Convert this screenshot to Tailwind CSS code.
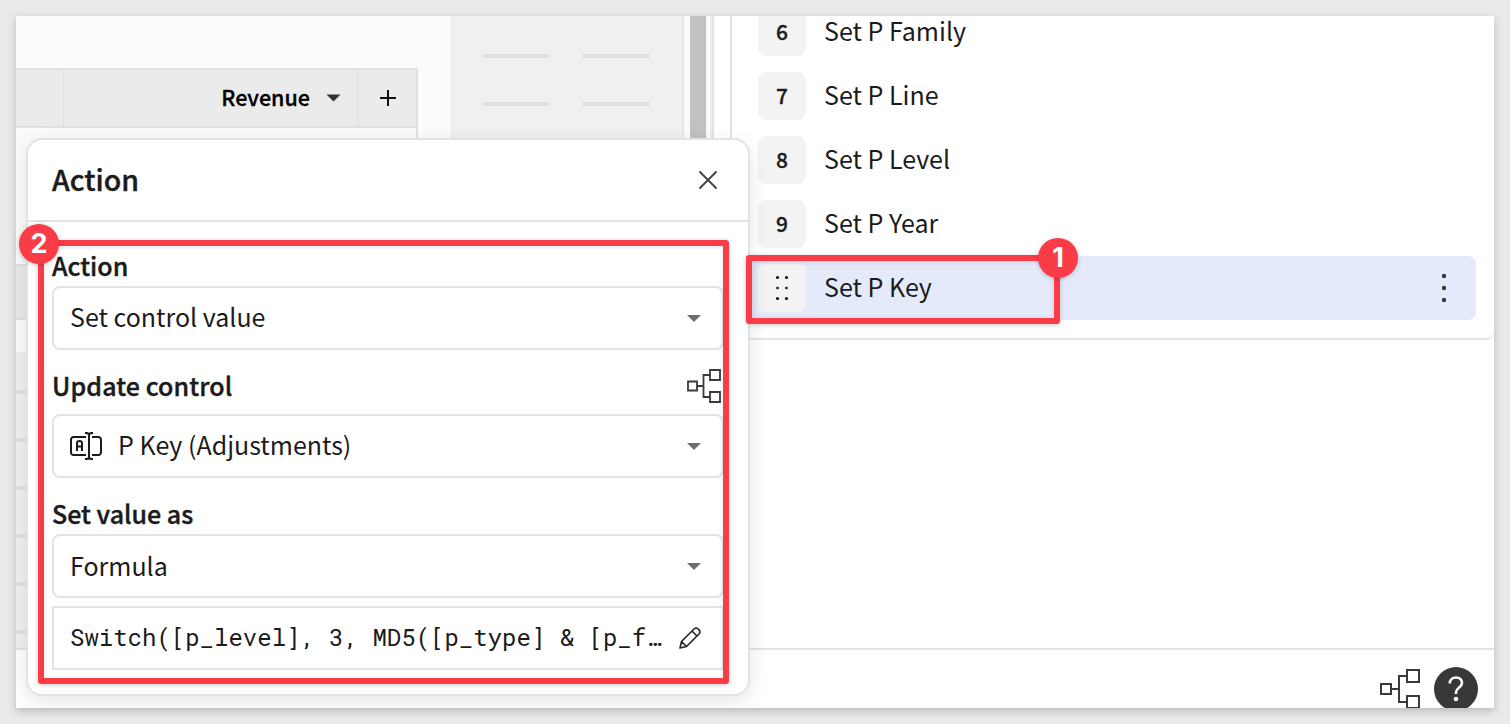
<!DOCTYPE html>
<html lang="en">
<head>
<meta charset="utf-8">
<title>Action editor</title>
<script src="https://cdn.jsdelivr.net/npm/@tailwindcss/browser@4"></script>
</head>
<body class="h-[724px] w-[1510px] overflow-hidden bg-[#eaeaea] p-4 font-['Noto_Sans_CJK_SC',sans-serif] text-[#1b1b1b]">
<div class="h-[692px] w-[1478px] bg-white shadow-[0_3px_8px_rgba(0,0,0,0.22)]">
<main class="relative flex h-[692px] w-[1478px] overflow-hidden">

  <!-- workbook canvas -->
  <section class="flex h-[634px] w-[698px] shrink-0 bg-[#fbfbfb]">
    <div class="flex w-[434px] flex-col">
      <div class="mt-[52px] flex h-[60px] w-[402px] border-y-2 border-r-2 border-[#e0e0e0] bg-[#ebebeb]">
        <div class="w-12 border-r border-[#e0e0e0]"></div>
        <div class="flex flex-1 items-center justify-end border-r-2 border-[#e3e3e3] pr-4">
          <span class="pb-[3px] text-[21.5px] leading-[53px] font-medium text-black [-webkit-text-stroke:0.3px_black]">Revenue</span>
          <svg class="ml-4" width="15" height="8" viewBox="0 0 15 8"><path d="M.5.5h14l-7 7z" fill="#333"/></svg>
        </div>
        <div class="flex w-[57px] items-center justify-center"><svg width="16" height="16" viewBox="0 0 16 16" fill="none" stroke="#111" stroke-width="2"><path d="M8 0v16M0 8h16"/></svg></div>
      </div>
      <div class="h-[136px] w-[402px] border-r-2 border-[#e0e0e0]"></div>
      <div class="h-14 border-y-2 border-[#dedede] bg-[#e8e8e8]"></div>
      <div class="h-8"></div>
      <div class="flex flex-1 flex-col gap-11 border-b-2 border-[#e3e3e3] bg-[#f0f0f0] pt-[38px]">
        <div class="h-1 bg-[#e0e0e0]"></div><div class="h-1 bg-[#e0e0e0]"></div><div class="h-1 bg-[#e0e0e0]"></div>
        <div class="h-1 bg-[#e0e0e0]"></div><div class="h-1 bg-[#e0e0e0]"></div><div class="h-1 bg-[#e0e0e0]"></div>
      </div>
    </div>
    <div class="w-[234px] border-r-2 border-[#e6e6e6] bg-[#f0f0f0] pt-[38px] pl-8">
      <div class="grid grid-cols-[68px_68px] gap-x-8 gap-y-11">
        <div class="h-1 rounded-full bg-[#e0e0e0]"></div><div class="h-1 rounded-full bg-[#e0e0e0]"></div>
        <div class="h-1 rounded-full bg-[#e0e0e0]"></div><div class="h-1 rounded-full bg-[#e0e0e0]"></div>
      </div>
    </div>
    <div class="flex w-[30px] justify-between border-r-2 border-[#e3e3e3] pl-1.5"><div class="w-4 bg-[#c1c1c1]"></div><div class="w-0.5 bg-[#ededed]"></div></div>
  </section>

  <!-- action sequence -->
  <aside class="flex flex-1 flex-col pl-4">
    <div class="h-[324px] shrink-0 rounded-br-lg border-b-2 border-l-2 border-[#e3e3e3] pr-[18px] pl-2.5">
      <div class="-mt-4 flex h-16 items-center pl-4"><div class="flex size-12 items-center justify-center rounded-lg bg-[#f3f3f3] pb-0.5 text-[21px] leading-[28px] font-medium [-webkit-text-stroke:0.3px_#1b1b1b]">6</div><span class="pb-[3px] pl-[18px] text-[25px] leading-[27px]">Set P Family</span></div>
      <div class="flex h-16 items-center pl-4"><div class="flex size-12 items-center justify-center rounded-lg bg-[#f3f3f3] pb-0.5 text-[21px] leading-[28px] font-medium [-webkit-text-stroke:0.3px_#1b1b1b]">7</div><span class="pb-[3px] pl-[18px] text-[25px] leading-[27px]">Set P Line</span></div>
      <div class="flex h-16 items-center pl-4"><div class="flex size-12 items-center justify-center rounded-lg bg-[#f3f3f3] pb-0.5 text-[21px] leading-[28px] font-medium [-webkit-text-stroke:0.3px_#1b1b1b]">8</div><span class="pb-[3px] pl-[18px] text-[25px] leading-[27px]">Set P Level</span></div>
      <div class="flex h-16 items-center pl-4"><div class="flex size-12 items-center justify-center rounded-lg bg-[#f3f3f3] pb-0.5 text-[21px] leading-[28px] font-medium [-webkit-text-stroke:0.3px_#1b1b1b]">9</div><span class="pb-[3px] pl-[18px] text-[25px] leading-[27px]">Set P Year</span></div>
      <div class="flex h-16 items-center rounded-lg bg-[#e4eafa] pr-[29px] pl-4">
        <div class="flex size-12 items-center justify-center rounded-lg bg-[#f3f3f3]"><svg width="14" height="26" viewBox="0 0 14 26" fill="#111"><circle cx="2.5" cy="2.5" r="1.6"/><circle cx="11.5" cy="2.5" r="1.6"/><circle cx="2.5" cy="13" r="1.3"/><circle cx="11.5" cy="13" r="1.3"/><circle cx="2.5" cy="23.5" r="1.6"/><circle cx="11.5" cy="23.5" r="1.6"/></svg></div>
        <span class="flex-1 pb-[3px] pl-[18px] text-[25px] leading-[27px]">Set P Key</span>
        <svg width="6" height="30" viewBox="0 0 6 30" fill="#3a3a3a"><circle cx="3" cy="3" r="2.2"/><circle cx="3" cy="15" r="2.2"/><circle cx="3" cy="27" r="2.2"/></svg>
      </div>
    </div>
    <div class="h-[308px] shrink-0"></div>
    <footer class="-ml-4 flex h-[60px] items-start justify-end gap-3.5 border-t-2 border-[#e3e3e3] pt-[17px] pr-4">
      <svg class="mt-0.5 shrink-0" width="40" height="42" viewBox="0 0 40 42" fill="none" stroke="#3a3a3a" stroke-width="2"><path d="M1 15h10v10H1zM27 1h12v12H27zM27 27h12v12H27zM11 20h8M27 7h-8v26h8"/></svg>
      <div class="flex size-11 items-center justify-center rounded-full bg-[#383838]"><svg width="16" height="26" viewBox="0 0 16 26" fill="none" stroke="#fff" stroke-width="2.6"><path d="M1.8 7.5C1.8 3.8 4.3 1.5 8 1.5s6 2.2 6 5.4c0 4.5-6 5-6 9.2v2"/><circle cx="8" cy="23" r="2.3" fill="#fff" stroke="none"/></svg></div>
    </footer>
  </aside>

  <!-- action popover -->
  <div class="absolute top-[122px] left-2.5 h-[558px] w-[724px] rounded-2xl border-2 border-[#e3e3e3] bg-white shadow-[0_6px_20px_rgba(0,0,0,0.1)]">
    <header class="flex h-[82px] items-center justify-between border-b-2 border-[#e3e3e3] pr-[31px] pl-6">
      <h2 class="pb-0.5 text-[28.5px] leading-[78px] font-medium [-webkit-text-stroke:0.4px_#1b1b1b]">Action</h2>
      <svg width="18" height="18" viewBox="0 0 18 18" fill="none" stroke="#444" stroke-width="1.9" stroke-linecap="round"><path d="M1 1l16 16M17 1L1 17"/></svg>
    </header>
    <div class="flex w-[696px] flex-col pl-6">
      <div class="mt-6 flex h-10 items-center pb-px text-[25px] font-medium [-webkit-text-stroke:0.4px_#1b1b1b]">Action</div>
      <div class="flex h-16 items-center justify-between rounded-lg border-2 border-[#e3e3e3] pr-[21px] pl-4"><span class="pb-0.5 text-[25px]">Set control value</span><svg width="14" height="7" viewBox="0 0 14 7"><path d="M0 0h14L7 7z" fill="#6e6e6e"/></svg></div>
      <div class="mt-3 flex h-[52px] items-center justify-between pr-[3px] pb-1 text-[25px] font-medium"><span class="tracking-[0.1px] [-webkit-text-stroke:0.4px_#1b1b1b]">Update control</span><svg width="34" height="34" viewBox="0 0 34 34" fill="none" stroke="#3a3a3a" stroke-width="1.8"><path d="M1 12.5h9v9H1zM23 1h10v10H23zM23 23h10v10H23zM10 17h6.500M23 6h-6.500v22H23"/></svg></div>
      <div class="flex h-16 items-center rounded-lg border-2 border-[#e3e3e3] pr-[21px] pl-4">
        <svg width="32" height="28" viewBox="0 0 32 28" fill="none" stroke="#1b1b1b" stroke-width="2"><path d="M16 5H3.500A2.500 2.500 0 0 0 1 7.500v13A2.500 2.500 0 0 0 3.500 23H16M22 5h6.500A2.500 2.500 0 0 1 31 7.500v13a2.500 2.500 0 0 1-2.500 2.500H22M15 1h1.500q2.500 0 2.500 2.500v21q0 2.500-2.500 2.500H15M23 1h-1.500Q19 1 19 3.500v21q0 2.500 2.500 2.500H23M7 19v-8q0-2 2.500-2t2.500 2v8M7 14.500h5"/></svg>
        <span class="flex-1 pb-0.5 pl-4 text-[25px]">P Key (Adjustments)</span><svg width="14" height="7" viewBox="0 0 14 7"><path d="M0 0h14L7 7z" fill="#6e6e6e"/></svg></div>
      <div class="mt-4 flex h-10 items-center pb-px text-[25px] font-medium [-webkit-text-stroke:0.4px_#1b1b1b]">Set value as</div>
      <div class="flex h-16 items-center justify-between rounded-lg border-2 border-[#e3e3e3] pr-[21px] pl-4"><span class="text-[25px]">Formula</span><svg width="14" height="7" viewBox="0 0 14 7"><path d="M0 0h14L7 7z" fill="#6e6e6e"/></svg></div>
      <div class="mt-2 flex h-16 items-center justify-between border-2 border-[#e3e3e3] pr-[21px] pl-4"><span class="pb-0.5 font-['Roboto_Mono','Liberation_Mono',monospace] text-[24px] whitespace-pre">Switch([p_level], 3, MD5([p_type] &amp; [p_f…</span><svg width="22" height="22" viewBox="0 0 22 22" fill="none" stroke="#222" stroke-width="1.6" stroke-linejoin="round"><path d="M1 21l1.500-6.500L15.300 1.800a2.500 2.500 0 0 1 3.600 0l1.300 1.300a2.500 2.500 0 0 1 0 3.600L7.500 19.500zM2.500 14.500l5 5M13 4l5 5"/></svg></div>
    </div>
  </div>
</main>
</div>

<!-- numbered callouts -->
<div class="absolute top-[240px] left-[38px] h-[444px] w-[691px] rounded-[3px] border-6 border-[#f93c48] shadow-[0_1px_5px_rgba(0,0,0,0.2),inset_0_1px_5px_rgba(0,0,0,0.12)]"></div>
<div class="absolute top-[224px] left-[19px] flex size-10 items-center justify-center rounded-full bg-[#f93c48] font-['Inter',sans-serif] text-[27px] font-bold text-white shadow-[0_1px_5px_rgba(0,0,0,0.2)]">2</div>
<div class="absolute top-[255px] left-[746px] h-[69px] w-[314px] rounded-[3px] border-6 border-[#f93c48] shadow-[0_1px_5px_rgba(0,0,0,0.2),inset_0_1px_5px_rgba(0,0,0,0.12)]"></div>
<div class="absolute top-[238px] left-[1038px] flex size-10 items-center justify-center rounded-full bg-[#f93c48] font-['Inter',sans-serif] text-[27px] font-bold text-white shadow-[0_1px_5px_rgba(0,0,0,0.2)]">1</div>
</body>
</html>
